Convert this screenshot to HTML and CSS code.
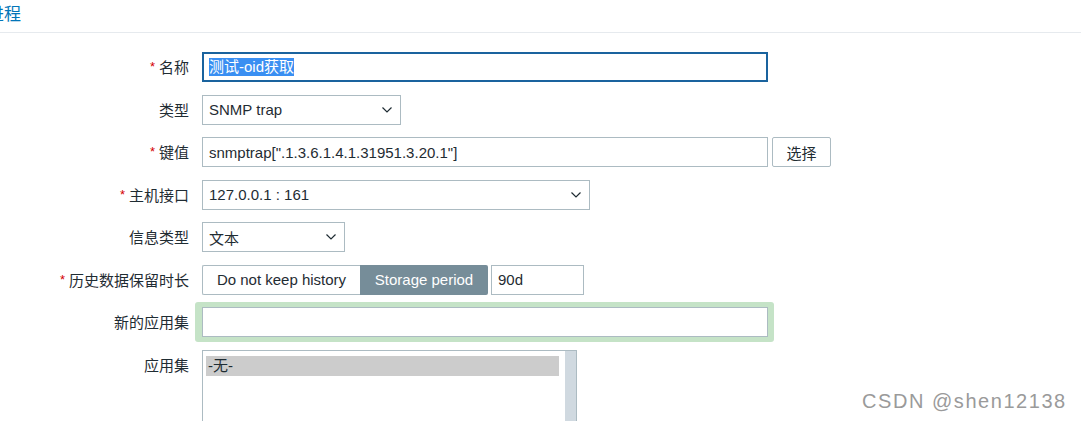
FILE: index.html
```html
<!DOCTYPE html>
<html lang="zh">
<head>
<meta charset="utf-8">
<title>进程</title>
<link rel="stylesheet" href="styles.css">
</head>
<body>
<div class="header"><span class="title">进程</span></div>
<div class="form">
  <div class="label"><span class="req">*</span>名称</div>
  <div class="ctrl"><div class="input focus w-name"><span class="sel">测试-oid获取</span></div></div>

  <div class="label">类型</div>
  <div class="ctrl"><div class="select w-type"><span>SNMP trap</span><svg class="chev" viewBox="0 0 10 6" width="10" height="6"><path d="M0.5 0.5 L5 5 L9.5 0.5" fill="none" stroke="#1f2c33" stroke-width="1.2"/></svg></div></div>

  <div class="label"><span class="req">*</span>键值</div>
  <div class="ctrl row"><div class="input w-key">snmptrap[".1.3.6.1.4.1.31951.3.20.1"]</div><div class="btn">选择</div></div>

  <div class="label"><span class="req">*</span>主机接口</div>
  <div class="ctrl"><div class="select w-host"><span>127.0.0.1 : 161</span><svg class="chev" viewBox="0 0 10 6" width="10" height="6"><path d="M0.5 0.5 L5 5 L9.5 0.5" fill="none" stroke="#1f2c33" stroke-width="1.2"/></svg></div></div>

  <div class="label">信息类型</div>
  <div class="ctrl"><div class="select w-info"><span>文本</span><svg class="chev" viewBox="0 0 10 6" width="10" height="6"><path d="M0.5 0.5 L5 5 L9.5 0.5" fill="none" stroke="#1f2c33" stroke-width="1.2"/></svg></div></div>

  <div class="label"><span class="req">*</span>历史数据保留时长</div>
  <div class="ctrl row">
    <div class="radio">
      <div class="opt opt-off">Do not keep history</div>
      <div class="opt opt-on">Storage period</div>
    </div>
    <div class="input w-period">90d</div>
  </div>

  <div class="label">新的应用集</div>
  <div class="ctrl"><div class="hl"><div class="input w-name"></div></div></div>

  <div class="label top">应用集</div>
  <div class="ctrl last">
    <div class="listbox">
      <div class="items"><div class="item">-无-</div></div>
      <div class="scroll"></div>
    </div>
  </div>
</div>
<div class="wm">CSDN @shen12138</div>
</body>
</html>
```

FILE: styles.css
```css
html, body {
  margin: 0;
  padding: 0;
  background: #ffffff;
  overflow: hidden;
}
body {
  width: 1081px;
  height: 421px;
  font-family: "Liberation Sans", Arial, "Noto Sans CJK SC", sans-serif;
  font-size: 15px;
  color: #1f2c33;
  position: relative;
}
.header {
  height: 32px;
  border-bottom: 1px solid #e6eaee;
  box-sizing: content-box;
  display: flex;
  align-items: center;
}
.title {
  font-family: "Noto Sans CJK SC", sans-serif;
  font-size: 17px;
  color: #0275b8;
  margin-left: -13px;
  line-height: 22px;
  margin-top: -7px;
}
.form {
  display: grid;
  grid-template-columns: 189px 1fr;
  column-gap: 13px;
  row-gap: 12.57px;
  padding-top: 19px;
}
.label {
  text-align: right;
  height: 30px;
  line-height: 30px;
  font-family: "Noto Sans CJK SC", sans-serif;
  font-size: 15px;
  white-space: nowrap;
}
.req {
  color: #d40000;
  font-family: "Liberation Sans", sans-serif;
  font-size: 13px;
  margin-right: 4px;
  position: relative;
  top: -2px;
}
.ctrl {
  display: flex;
  align-items: center;
  height: 30px;
}
.row { gap: 4px; }
.input, .select {
  box-sizing: border-box;
  height: 30px;
  border: 1px solid #acbbc2;
  background: #fff;
  padding: 0 6px;
  display: flex;
  align-items: center;
  white-space: nowrap;
  font-family: "Liberation Sans", Arial, "Noto Sans CJK SC", sans-serif;
}
.focus {
  border: 2px solid #1a639e;
  padding: 0 5px;
}
.sel {
  background: #3a8ff2;
  color: #fff;
  line-height: 18px;
}
.w-name { width: 566px; }
.w-key { width: 566px; }
.w-type { width: 199px; }
.w-host { width: 388px; }
.w-info { width: 143px; }
.w-period { width: 93px; margin-left: -1px; }
.select { justify-content: space-between; padding-right: 8px; }
.chev { flex: none; }
.btn {
  box-sizing: border-box;
  height: 30px;
  width: 59px;
  border: 1px solid #acbbc2;
  border-radius: 2px;
  background: #fff;
  display: flex;
  align-items: center;
  justify-content: center;
  font-family: "Noto Sans CJK SC", sans-serif;
}
.radio {
  display: flex;
  height: 30px;
}
.opt {
  box-sizing: border-box;
  height: 30px;
  display: flex;
  align-items: center;
  justify-content: center;
  white-space: nowrap;
}
.opt-off {
  width: 158px;
  border: 1px solid #acbbc2;
  border-right: none;
  border-radius: 2px 0 0 2px;
  background: #fff;
}
.opt-on {
  width: 128px;
  background: #768d99;
  color: #fff;
  border-radius: 0 2px 2px 0;
}
.hl {
  background: #c5e3c7;
  border-radius: 3px;
  padding: 5px 6px 5px 7px;
  margin-left: -7px;
}
.label.top { align-self: start; }
.ctrl.last { align-items: flex-start; height: 80px; }
.listbox {
  box-sizing: border-box;
  width: 375px;
  height: 90px;
  border: 1px solid #acbbc2;
  border-bottom: none;
  background: #fff;
  display: flex;
}
.items {
  flex: 1;
  padding: 5px 6px 0 3px;
}
.item {
  background: #cccccc;
  height: 20px;
  line-height: 20px;
  padding-left: 2px;
  font-family: "Liberation Sans", Arial, "Noto Sans CJK SC", sans-serif;
}
.scroll {
  width: 11px;
  background: #d0d9e0;
}
.wm {
  position: absolute;
  left: 862px;
  top: 390px;
  font-family: "Liberation Sans", Arial, sans-serif;
  font-size: 20px;
  letter-spacing: 1.55px;
  color: #9a9a9a;
}
```
